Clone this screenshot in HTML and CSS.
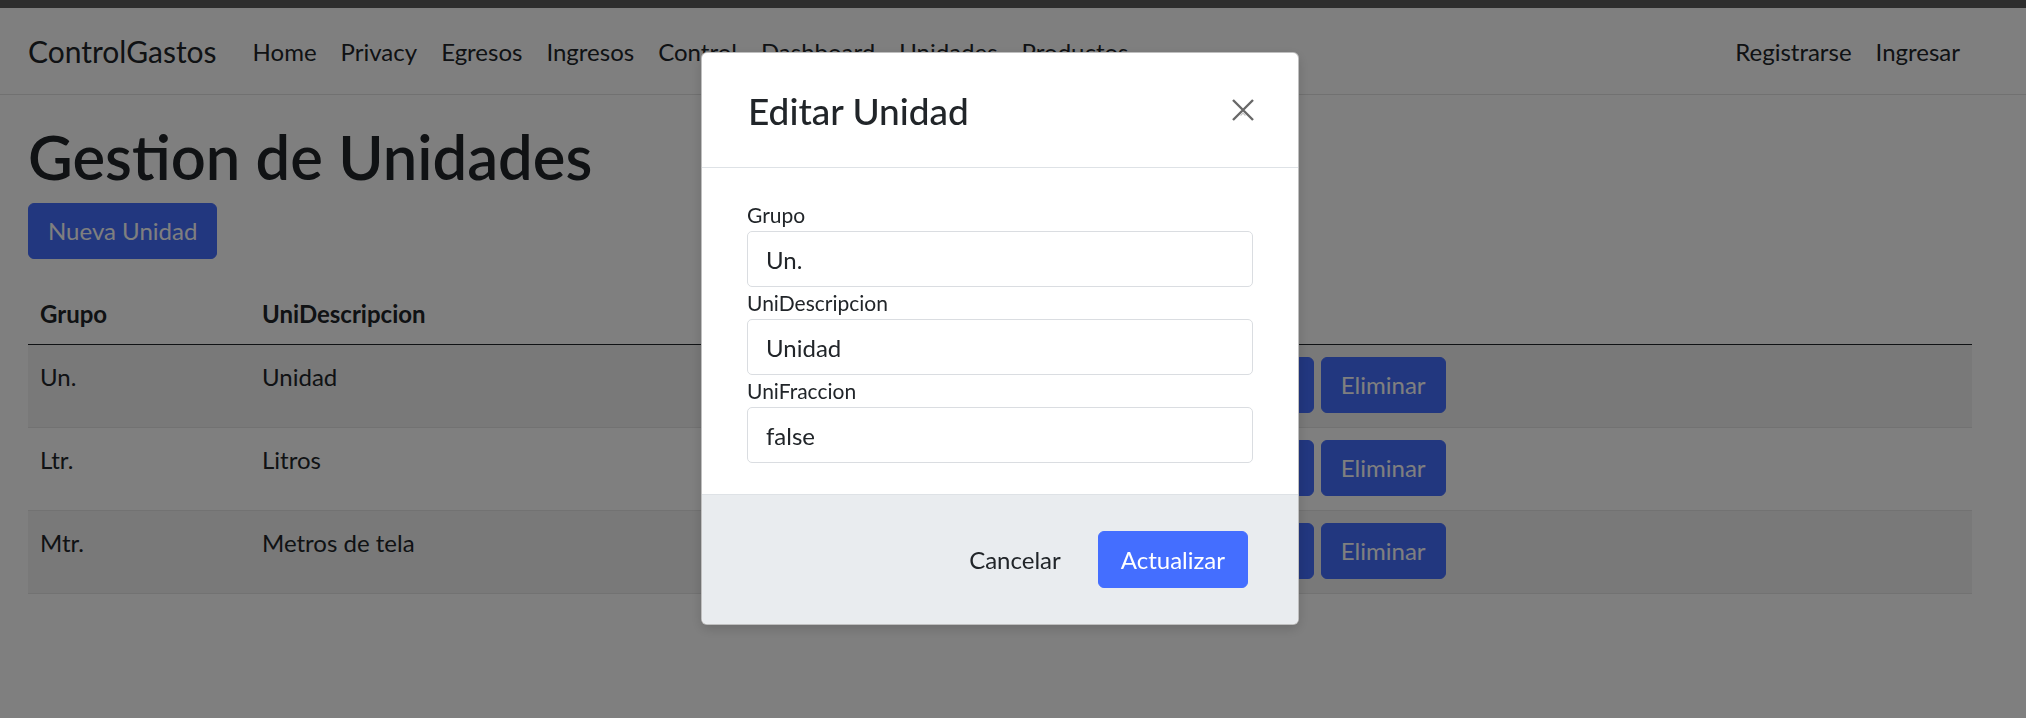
FILE: index.html
```html
<!DOCTYPE html>
<html lang="es">
<head>
<meta charset="utf-8">
<title>Gestion de Unidades - ControlGastos</title>
<link rel="stylesheet" href="styles.css">
</head>
<body>
<div class="topbar"></div>
<header class="navbar">
  <div class="nav-inner">
    <a class="brand" href="#">ControlGastos</a>
    <ul class="nav-links">
      <li><a href="#">Home</a></li>
      <li><a href="#">Privacy</a></li>
      <li><a href="#">Egresos</a></li>
      <li><a href="#">Ingresos</a></li>
      <li><a href="#">Control</a></li>
      <li><a href="#">Dashboard</a></li>
      <li><a href="#">Unidades</a></li>
      <li><a href="#">Productos</a></li>
    </ul>
    <ul class="nav-links nav-right">
      <li><a href="#">Registrarse</a></li>
      <li><a href="#">Ingresar</a></li>
    </ul>
  </div>
</header>
<main class="container">
  <h1 class="page-title">Gestion de Unidades</h1>
  <p class="actions"><button class="btn btn-primary">Nueva Unidad</button></p>
  <table class="table">
    <thead>
      <tr><th class="col-grupo">Grupo</th><th class="col-desc">UniDescripcion</th><th></th></tr>
    </thead>
    <tbody>
      <tr><td>Un.</td><td>Unidad</td><td class="cell-actions"><div class="row-actions"><button class="btn btn-primary">Editar</button><button class="btn btn-primary">Eliminar</button></div></td></tr>
      <tr><td>Ltr.</td><td>Litros</td><td class="cell-actions"><div class="row-actions"><button class="btn btn-primary">Editar</button><button class="btn btn-primary">Eliminar</button></div></td></tr>
      <tr><td>Mtr.</td><td>Metros de tela</td><td class="cell-actions"><div class="row-actions"><button class="btn btn-primary">Editar</button><button class="btn btn-primary">Eliminar</button></div></td></tr>
    </tbody>
  </table>
</main>
<div class="backdrop"></div>
<div class="modal" role="dialog">
  <div class="modal-header">
    <h5 class="modal-title">Editar Unidad</h5>
    <button class="btn-close" aria-label="Close">
      <svg width="22" height="22" viewBox="0 0 22 22"><path d="M1 1 L21 21 M21 1 L1 21" stroke="#686868" stroke-width="2.4" fill="none"/><path d="M8.5 16.5 L11 14 L13.5 16.5" stroke="#c4c4c4" stroke-width="1.2" fill="none"/></svg>
    </button>
  </div>
  <div class="modal-body">
    <label class="form-label">Grupo</label>
    <input class="form-control" value="Un.">
    <label class="form-label">UniDescripcion</label>
    <input class="form-control" value="Unidad">
    <label class="form-label">UniFraccion</label>
    <input class="form-control" value="false">
  </div>
  <div class="modal-footer">
    <button class="btn btn-link">Cancelar</button>
    <button class="btn btn-primary btn-modal">Actualizar</button>
  </div>
</div>
</body>
</html>
```

FILE: styles.css
```css
* { box-sizing: border-box; }
html, body { margin: 0; padding: 0; }
body {
  font-family: "Lato", "Liberation Sans", sans-serif;
  font-size: 24px;
  line-height: 1.5;
  color: #212529;
  background: #ffffff;
  width: 2026px;
  height: 718px;
  overflow: hidden;
}
.topbar { height: 8px; background: #5c5c5c; }
.navbar {
  background: #fff;
  border-bottom: 1px solid #e2e2e2;
  padding: 14px 0 12px;
}
.nav-inner {
  display: flex;
  align-items: center;
  margin: 0 54px 0 28px;
}
.brand {
  font-size: 30px;
  line-height: 45px;
  padding: 7px 0 8px;
  margin-right: 24px;
  color: #212529;
  text-decoration: none;
}
.nav-links {
  list-style: none;
  margin: 0;
  padding: 0;
  display: flex;
}
.nav-links a {
  display: block;
  padding: 12px 12px;
  line-height: 36px;
  color: #212529;
  text-decoration: none;
}
.nav-right { margin-left: auto; }

.container { margin: 24px 54px 0 28px; }
.page-title {
  font-size: 61.5px;
  font-weight: 600;
  line-height: 69px;
  padding-top: 3px;
  margin: 0 0 12px;
}
.actions { margin: 0 0 24px; }
.btn {
  font-family: inherit;
  font-size: 24px;
  line-height: 36px;
  padding: 9px 19px;
  border: 1px solid transparent;
  border-radius: 6px;
  cursor: pointer;
}
.btn-primary { background: #446eff; border-color: #446eff; color: #fff; }
.btn-link { background: transparent; color: #212529; padding: 9px 18px; }

.table {
  width: 100%;
  border-collapse: collapse;
  table-layout: fixed;
}
.table th, .table td {
  text-align: left;
  vertical-align: top;
  padding: 14px 12px 12px;
}
.table th { font-weight: 700; border-bottom: 1px solid #212529; padding-top: 13px; }
.table td { border-bottom: 1px solid #e4e4e4; }
.table td.cell-actions { padding: 12px 12px 14px; }
.table tbody tr:nth-child(odd) td { background: #f2f2f2; }
.col-grupo { width: 222px; }
.col-desc { width: 950px; }
.row-actions { display: flex; gap: 7px; }

.backdrop {
  position: fixed;
  inset: 0;
  background: rgba(0, 0, 0, 0.5);
}
.modal {
  position: fixed;
  left: 701px;
  top: 52px;
  width: 598px;
  background: #fff;
  border: 1px solid rgba(0, 0, 0, 0.25);
  border-radius: 6px;
  box-shadow: 0 4px 12px rgba(0, 0, 0, 0.15);
  overflow: hidden;
}
.modal-header {
  display: flex;
  align-items: center;
  padding: 35px 44px 35px 46px;
  border-bottom: 1px solid #dee2e6;
}
.modal-title {
  margin: 0;
  font-size: 37px;
  font-weight: 500;
  line-height: 42px;
  padding-top: 2px;
}
.btn-close {
  margin-left: auto;
  padding: 0;
  border: 0;
  background: transparent;
  width: 22px;
  height: 22px;
  display: flex;
}
.modal-body { padding: 31px 45px; }
.form-label {
  display: block;
  font-size: 21px;
  line-height: 32px;
}
.form-control {
  display: block;
  width: 100%;
  height: 56px;
  font-family: inherit;
  font-size: 24px;
  line-height: 36px;
  padding: 9px 18px;
  color: #212529;
  border: 1px solid #dadde1;
  border-radius: 5px;
  background: #fff;
}
.modal-footer {
  display: flex;
  justify-content: flex-end;
  align-items: center;
  padding: 36px 50px;
  background: #e9ecef;
  border-top: 1px solid #dee2e6;
}
.btn-modal {
  margin-left: 18px;
  padding: 10px 22px;
  height: 57px;
}
```
